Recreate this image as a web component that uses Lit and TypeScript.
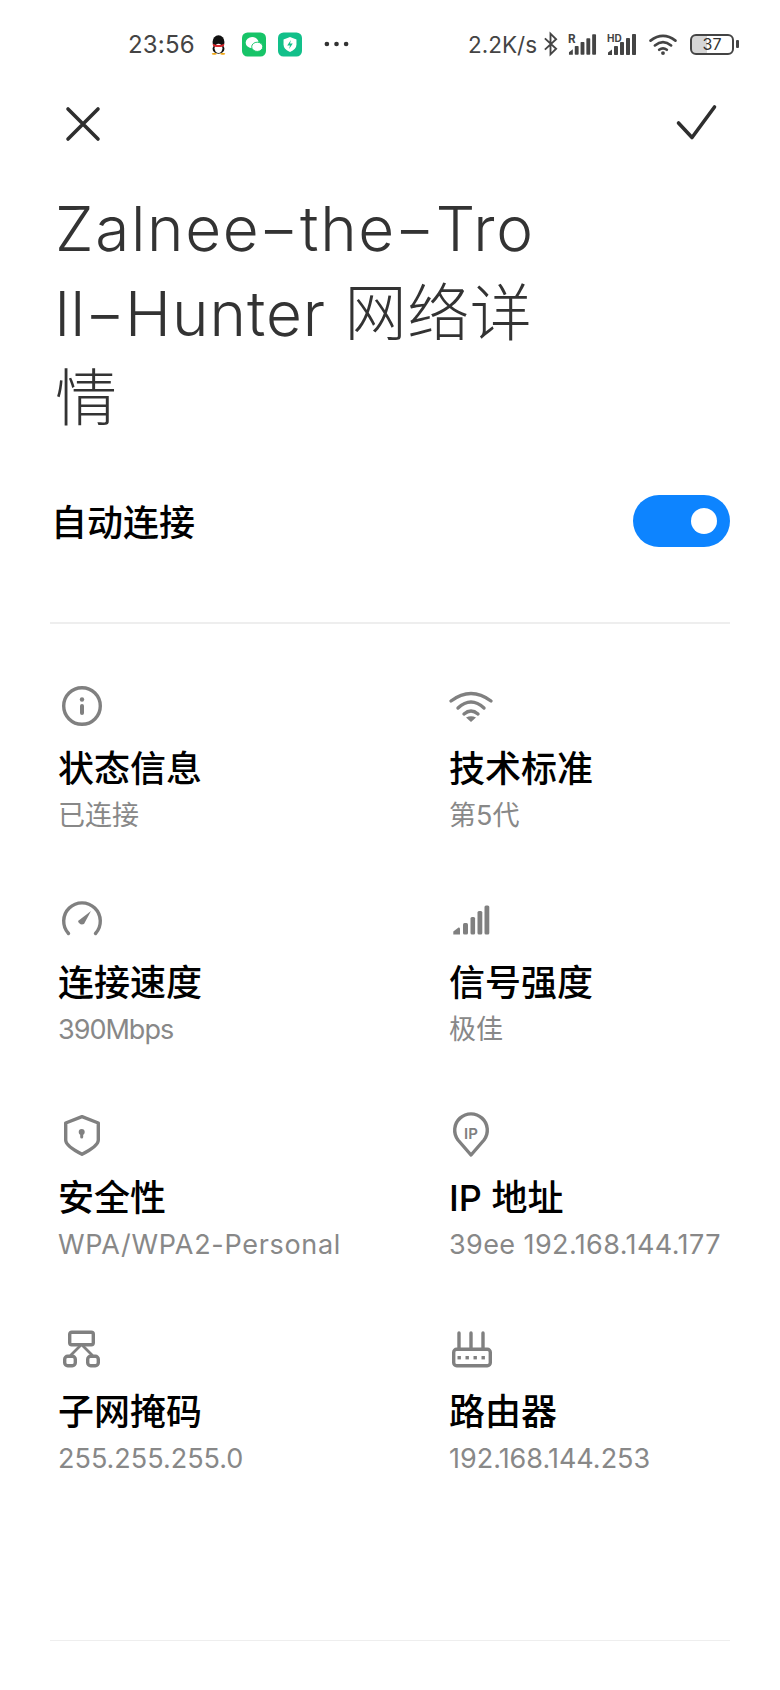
import { LitElement, html, css, svg } from "lit";
import { customElement } from "lit/decorators.js";

const icons: Record<string, unknown> = {
  info: svg`<g transform="translate(1 0)"><circle cx="22" cy="22" r="18.3" fill="none" stroke="#808080" stroke-width="3.4"/><circle cx="22" cy="15.500" r="2.200" fill="#808080"/><rect x="20" y="20" width="4" height="11" rx="2" fill="#808080"/></g>`,
  wifi: svg`<g fill="none" stroke="#808080" stroke-width="3.4" stroke-linecap="round"><path d="M2 17Q22 2 42 17"/><path d="M9 24Q22 12 35 24"/><path d="M15 30Q22 24 29 30"/></g><path d="M17 33.500Q22 31 27 33.500L22 38Z" fill="#808080"/>`,
  gauge: svg`<g transform="translate(1 0)"><path d="M8.500 35.500A18.300 18.300 0 1 1 35.500 35.500" fill="none" stroke="#808080" stroke-width="3.4" stroke-linecap="round"/><path d="M18 23L31 13L24 26Q19.500 27.500 18 23Z" fill="#808080"/></g>`,
  signal: svg`<g fill="#808080"><path d="M4.300 36.500V33.500L9.500 29.500Q11 29 11 31V36.500Z"/><rect x="14" y="25" width="5" height="11.500" rx="1.500"/><rect x="21.500" y="19" width="4.600" height="17.500" rx="1.500"/><rect x="28.500" y="13" width="4.800" height="23.500" rx="1.500"/><rect x="35.500" y="7.500" width="4.800" height="29" rx="1.500"/></g>`,
  shield: svg`<path d="M23 3.700L39.300 10V27Q39.300 33 23 41.300Q6.700 33 6.700 27V10Z" fill="none" stroke="#808080" stroke-width="3.4" stroke-linejoin="round"/><circle cx="22.700" cy="19" r="3" fill="#808080"/><rect x="21.200" y="19" width="3" height="6.500" rx="1.500" fill="#808080"/>`,
  pin: svg`<path d="M22 42L9 27A16.300 16.300 0 1 1 35 27Z" fill="none" stroke="#808080" stroke-width="3.4" stroke-linejoin="round"/><text x="22" y="25.500" text-anchor="middle" font-size="15" font-weight="600" fill="#808080" font-family="Inter">IP</text>`,
  net: svg`<g fill="none" stroke="#808080" stroke-width="3.4" stroke-linejoin="round" stroke-linecap="round"><rect x="10.700" y="5.200" width="23.600" height="12.600" rx="2"/><rect x="5.700" y="29.200" width="10.600" height="9.600" rx="3"/><rect x="28.700" y="29.200" width="10.600" height="9.600" rx="3"/><path d="M21 19L12 28M24 19L33 28" stroke-width="2.800"/></g>`,
  router: svg`<g fill="none" stroke="#808080" stroke-width="3.4" stroke-linecap="round"><path d="M10 6V21M22 6V21M34 6V21"/><rect x="4.700" y="22.200" width="36.600" height="16.600" rx="3"/></g><g fill="#808080"><rect x="8.500" y="29" width="3.400" height="3.400"/><rect x="16.500" y="29" width="3.400" height="3.400"/><rect x="24.500" y="29" width="3.400" height="3.400"/><rect x="32.500" y="29" width="3.400" height="3.400"/></g>`,
};

const items = [
  ["info", "状态信息", "已连接", ""],
  ["wifi", "技术标准", "第5代", ""],
  ["gauge", "连接速度", "390Mbps", "tight"],
  ["signal", "信号强度", "极佳", ""],
  ["shield", "安全性", "WPA/WPA2-Personal", "wider"],
  ["pin", "IP 地址", "39ee 192.168.144.177", "wide"],
  ["net", "子网掩码", "255.255.255.0", ""],
  ["router", "路由器", "192.168.144.253", ""],
];

const bars = svg`<g fill="#444"><path d="M1 22v-2.500l4-3v5.500z"/><rect x="7" y="13" width="4" height="9" rx=".8"/><rect x="13" y="9" width="4" height="13" rx=".8"/><rect x="19" y="5" width="4" height="17" rx=".8"/><rect x="25" y="1" width="4" height="21" rx=".8"/></g>`;

@customElement("app-root")
export class AppRoot extends LitElement {
  static styles = css`
    :host { display: block; width: 780px; height: 1690px; background: #fff; overflow: hidden;
      font-family: "Inter", "Noto Sans CJK SC", sans-serif; color: #000; }
    .status { height: 88px; box-sizing: border-box; padding: 0 0 0 128px; display: flex; align-items: center; color: #444; }
    .status svg { display: block; flex: none; }
    .time { font-size: 24px; width: 82px; letter-spacing: .2px; }
    .qq { margin-right: 15px; }
    .wx { margin-right: 12px; }
    .dots { margin-left: 22px; margin-right: 119px; }
    .speed { font-size: 22.5px; width: 68px; white-space: nowrap; }
    .bt { margin-left: 7px; margin-right: 10px; }
    .sig { margin-right: 10px; }
    .w { margin-left: 1px; margin-right: 12px; }
    .batt { width: 44px; height: 21px; border: 2.4px solid #444; border-radius: 6px; box-sizing: border-box; display: flex; align-items: center; justify-content: center; font-size: 16px; color: #333; background: linear-gradient(90deg,#d6d6d6 37%,#fff 37%); }
    .nub { width: 3px; height: 8px; background: #444; margin-left: 2px; border-radius: 1px; }

    .top { display: flex; justify-content: space-between; padding: 16px 61px 0 62px; height: 62px; box-sizing: border-box; }
    .title { margin: 36px 0 0 55px; font-size: 62px; line-height: 85px; font-weight: 300; color: #333; height: 256px; white-space: nowrap; }
    .l1 { letter-spacing: 1.65px; }
    .l2 { letter-spacing: 1px; }
    .cjk { letter-spacing: .6px; }
    .hy { display: inline-block; transform: scaleX(1.45); margin: 0 5px; }
    .row { display: flex; justify-content: space-between; align-items: center; margin: 53px 50px 0 51px; height: 52px; }
    .row span { font-size: 36px; font-weight: 500; margin-bottom: 3px; }
    .toggle { width: 97px; height: 52px; border-radius: 26px; background: #0d84ff; position: relative; }
    .knob { position: absolute; width: 26px; height: 26px; border-radius: 50%; background: #fff; right: 13px; top: 13px; }
    .rule { height: 1.5px; background: #eee; margin: 0 50px; }
    .r1 { margin-top: 75px; }
    .grid { display: grid; grid-template-columns: 391px 1fr; grid-auto-rows: 214.5px; padding: 60px 0 0 58px; height: 1016px; box-sizing: border-box; }
    .item { display: flex; flex-direction: column; align-items: flex-start; }
    .item svg { display: block; margin-bottom: 17px; overflow: visible; }
    .item:nth-child(odd) svg { margin-left: 1px; }
    .item b { font-size: 36px; font-weight: 500; line-height: 48px; }
    .item i { font-style: normal; font-size: 27px; line-height: 46px; color: #888; white-space: nowrap; }
    .item i.wider { letter-spacing: .7px; }
    .item i.wide { letter-spacing: .4px; }
    .item i.tight { letter-spacing: -1px; }
  `;
  render() {
    const hy = html`<span class="hy">-</span>`;
    return html`
      <div class="status">
        <span class="time">23:56</span>
        <svg class="qq" width="17" height="21" viewBox="0 0 20 24"><ellipse cx="10" cy="9" rx="7" ry="8" fill="#111"/><ellipse cx="10" cy="17" rx="7" ry="6" fill="#111"/><ellipse cx="10" cy="16.500" rx="4.600" ry="5.500" fill="#fff"/><path d="M3 11Q10 14 17 11L16 14Q10 16 4 14Z" fill="#d8262c"/><ellipse cx="5" cy="23" rx="3" ry="1" fill="#f0a000"/><ellipse cx="15" cy="23" rx="3" ry="1" fill="#f0a000"/></svg>
        <svg class="wx" width="24" height="25" viewBox="0 0 26 26"><rect width="26" height="26" rx="6" fill="#17c468"/><ellipse cx="11" cy="11" rx="7" ry="6" fill="#fff"/><ellipse cx="16.500" cy="15.500" rx="6" ry="5" fill="#fff" stroke="#17c468"/></svg>
        <svg width="24" height="25" viewBox="0 0 26 26"><rect width="26" height="26" rx="6" fill="#12c08a"/><path d="M13 5L20 7.500V13Q20 18 13 21Q6 18 6 13V7.500Z" fill="#fff"/><path d="M14 8L10 14H13L12 18L16 12H13Z" fill="#12c08a"/></svg>
        <svg class="dots" width="25" height="6" viewBox="0 0 26 6"><circle cx="3" cy="3" r="2.400" fill="#333"/><circle cx="13" cy="3" r="2.400" fill="#333"/><circle cx="23" cy="3" r="2.400" fill="#333"/></svg>
        <span class="speed">2.2K/s</span>
        <svg class="bt" width="15" height="26" viewBox="0 0 16 26"><path d="M2 7L14 18L8 24V2L14 8L2 19" fill="none" stroke="#444" stroke-width="2"/></svg>
        <svg class="sig" width="29" height="23" viewBox="0 0 30 23"><text x="0" y="10" font-size="12" font-weight="700" fill="#444" font-family="Inter">R</text>${bars}</svg>
        <svg class="sig" width="30" height="23" viewBox="0 0 30 23"><text x="0" y="9" font-size="10" font-weight="700" fill="#444" font-family="Inter">HD</text>${bars}</svg>
        <svg class="w" width="30" height="22" viewBox="0 0 30 23"><g fill="none" stroke="#444" stroke-width="2.800" stroke-linecap="round"><path d="M2 8Q15 -2 28 8"/><path d="M6.500 13Q15 6 23.500 13"/><path d="M11 17.500Q15 14.500 19 17.500"/></g><circle cx="15" cy="21" r="2" fill="#444"/></svg>
        <div class="batt">37</div><div class="nub"></div>
      </div>
      <div class="top">
        <svg width="44" height="44" viewBox="0 0 44 44"><path d="M6 5L36 35M36 5L6 35" stroke="#2e2e2e" stroke-width="3.600" stroke-linecap="round"/></svg>
        <svg width="44" height="44" viewBox="0 0 44 44"><path d="M3.500 19L17 33.500L39.500 3" fill="none" stroke="#2e2e2e" stroke-width="3.600" stroke-linecap="round" stroke-linejoin="round"/></svg>
      </div>
      <div class="title"><span class="l1">Zalnee${hy}the${hy}Tro</span><br><span class="l2">ll${hy}Hunter </span><span class="cjk">网络详</span><br>情</div>
      <div class="row"><span>自动连接</span><div class="toggle"><div class="knob"></div></div></div>
      <div class="rule r1"></div>
      <div class="grid">
        ${items.map(([ic, t, v, c]) => html`<div class="item">
          <svg width="44" height="44" viewBox="0 0 44 44">${icons[ic]}</svg>
          <b>${t}</b><i class=${c}>${v}</i>
        </div>`)}
      </div>
      <div class="rule"></div>
    `;
  }
}
